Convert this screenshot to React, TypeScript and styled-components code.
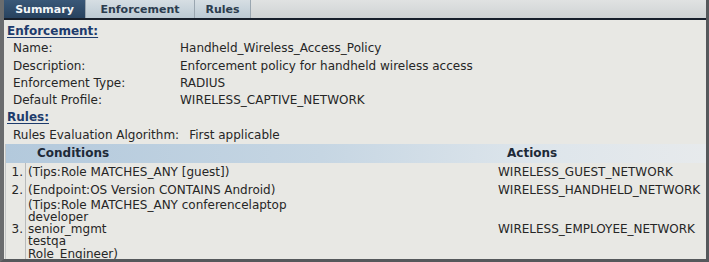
import React from "react";
import styled, { createGlobalStyle } from "styled-components";

const GlobalStyle = createGlobalStyle`
  html, body { margin: 0; padding: 0; background: #e7e7e3; }
  body { font-family: "DejaVu Sans", Verdana, sans-serif; }
`;

const Frame = styled.div`
  width: 709px;
  height: 262px;
  box-sizing: border-box;
  border-left: 4px solid #6a6c6e;
  border-right: 3px solid #55585b;
  border-bottom: 3px solid #55585b;
  background: #e8e8e4;
  overflow: hidden;
  display: flex;
  flex-direction: column;
  color: #262626;
  font-size: 12px;
`;

const TabBar = styled.div`
  display: flex;
  height: 18px;
  flex: none;
  background: linear-gradient(#e0e2e2, #cfd3d4);
  border-bottom: 2px solid #18202c;
`;

const Tab = styled.div<{ $active?: boolean; $w: number }>`
  width: ${(p) => p.$w}px;
  box-sizing: border-box;
  display: flex;
  align-items: center;
  justify-content: center;
  font-weight: bold;
  font-size: 11px;
  border-right: 1px solid #9aa6b0;
  color: ${(p) => (p.$active ? "#f4f6f8" : "#2b3c4e")};
  background: ${(p) =>
    p.$active
      ? "linear-gradient(#3a5878, #27425f)"
      : "linear-gradient(#d6dee3, #bccad4)"};
`;

const Content = styled.div`
  padding: 3px 0 0 1px;
  display: flex;
  flex-direction: column;
`;

const SectionTitle = styled.div`
  line-height: 17.3px;
  font-weight: bold;
  color: #1d3b6c;
  text-decoration: underline;
  text-underline-offset: 2px;
  padding-left: 2px;
`;

const InfoRow = styled.div`
  display: grid;
  grid-template-columns: 167px 1fr;
  line-height: 17.3px;
  padding-left: 8px;
  white-space: nowrap;
`;

const AlgoRow = styled.div`
  display: flex;
  gap: 10px;
  line-height: 17.3px;
  padding-left: 8px;
  white-space: nowrap;
`;

const Table = styled.div`
  display: flex;
  flex-direction: column;
  border-left: 1px solid #c4c6c6;
`;

const HeaderRow = styled.div`
  display: grid;
  grid-template-columns: 492px 1fr;
  height: 18.5px;
  align-items: center;
  font-weight: bold;
  color: #1e2a38;
  background: linear-gradient(90deg, #b3c9dc 0%, #c6d6e3 45%, #dde5eb 75%, #e7eaec 100%);
`;

const HeaderCell = styled.div<{ $pad: number }>`
  padding-left: ${(p) => p.$pad}px;
`;

const Row = styled.div`
  display: grid;
  grid-template-columns: 20px 472px 1fr;
  align-items: center;
  min-height: 18px;
  white-space: nowrap;
`;

const Num = styled.div`
  padding-right: 2px;
  align-self: stretch;
  display: flex;
  align-items: center;
  justify-content: flex-end;
  border-right: 1px solid #b9bbbb;
`;

const Cond = styled.div<{ $multi?: boolean }>`
  padding-left: 2px;
  line-height: ${(p) => (p.$multi ? "12.3px" : "18px")};
`;

const Action = styled.div`
  padding-left: 0;
`;

const info: [string, string][] = [
  ["Name:", "Handheld_Wireless_Access_Policy"],
  ["Description:", "Enforcement policy for handheld wireless access"],
  ["Enforcement Type:", "RADIUS"],
  ["Default Profile:", "WIRELESS_CAPTIVE_NETWORK"],
];

const rules: { n: string; cond: string[]; action: string }[] = [
  { n: "1.", cond: ["(Tips:Role MATCHES_ANY [guest])"], action: "WIRELESS_GUEST_NETWORK" },
  { n: "2.", cond: ["(Endpoint:OS Version CONTAINS Android)"], action: "WIRELESS_HANDHELD_NETWORK" },
  {
    n: "3.",
    cond: [
      "(Tips:Role MATCHES_ANY conferencelaptop",
      "developer",
      "senior_mgmt",
      "testqa",
      "Role_Engineer)",
    ],
    action: "WIRELESS_EMPLOYEE_NETWORK",
  },
];

export default function App() {
  return (
    <>
      <GlobalStyle />
      <Frame>
        <TabBar>
          <Tab $active $w={82}>Summary</Tab>
          <Tab $w={109}>Enforcement</Tab>
          <Tab $w={56}>Rules</Tab>
        </TabBar>
        <Content>
          <SectionTitle>Enforcement:</SectionTitle>
          {info.map(([k, v]) => (
            <InfoRow key={k}>
              <span>{k}</span>
              <span>{v}</span>
            </InfoRow>
          ))}
          <SectionTitle>Rules:</SectionTitle>
          <AlgoRow>
            <span>Rules Evaluation Algorithm:</span>
            <span>First applicable</span>
          </AlgoRow>
          <Table>
            <HeaderRow>
              <HeaderCell $pad={31}>Conditions</HeaderCell>
              <HeaderCell $pad={9}>Actions</HeaderCell>
            </HeaderRow>
            {rules.map((r) => {
              const multi = r.cond.length > 1;
              return (
                <Row key={r.n}>
                  <Num>{r.n}</Num>
                  <Cond $multi={multi}>
                    {r.cond.map((c) => (
                      <div key={c}>{c}</div>
                    ))}
                  </Cond>
                  <Action>{r.action}</Action>
                </Row>
              );
            })}
          </Table>
        </Content>
      </Frame>
    </>
  );
}
